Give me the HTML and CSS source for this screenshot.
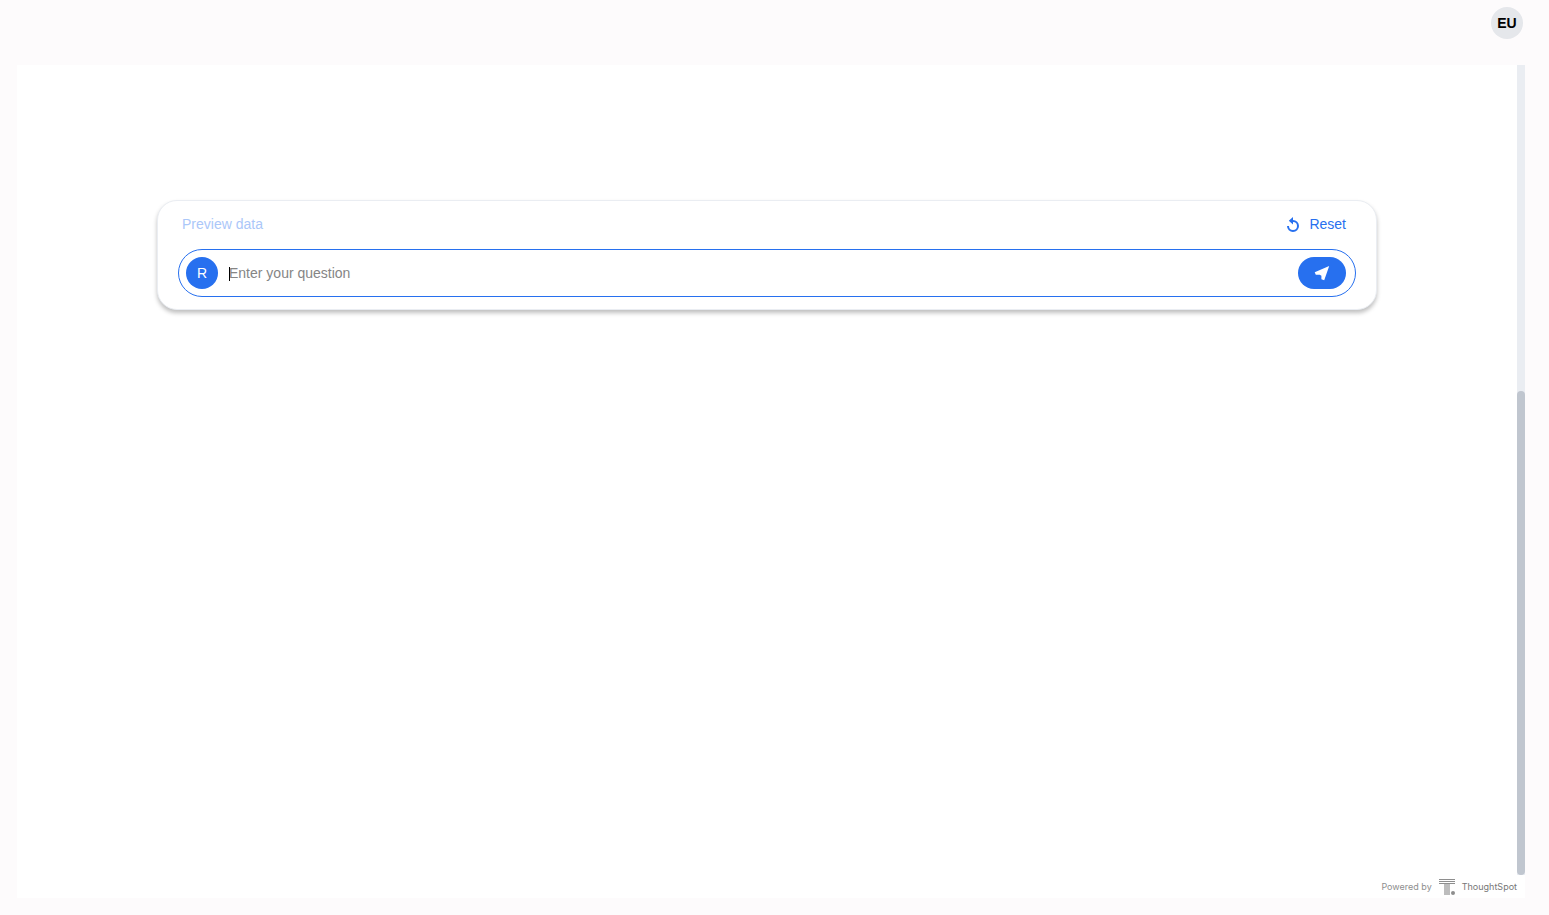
FILE: index.html
```html
<!DOCTYPE html>
<html lang="en">

<head>
    <meta charset="UTF-8">
    <meta name="viewport" content="width=device-width, initial-scale=1.0">
    <title>ThoughtSpot</title>
    <link rel="stylesheet" href="styles.css">
</head>

<body>
    <header class="topbar">
        <button class="user-button" type="button">EU</button>
    </header>

    <main class="panel">
        <div class="panel-body">
            <div class="conversation">
                <form class="prompt-card">
                    <div class="prompt-actions">
                        <button class="text-button" type="button" disabled>Preview data</button>
                        <button class="text-button" type="button">
                            <svg class="reset-icon" viewBox="0 0 16 16" aria-hidden="true">
                                <path d="M7.500 5h.5a5 5 0 1 1-5 5" fill="none" stroke="currentColor" stroke-width="2" />
                                <path d="M3.800 4.800L8 1v7.600z" fill="currentColor" />
                            </svg>
                            Reset
                        </button>
                    </div>
                    <div class="prompt-box">
                        <span class="source-badge">R</span>
                        <div class="prompt-field">
                            <input type="text" placeholder="Enter your question" aria-label="Enter your question">
                        </div>
                        <button class="send-button" type="submit" aria-label="Send">
                            <svg class="send-icon" viewBox="0 0 16 16" aria-hidden="true">
                                <path d="M15.200 1L10.200 15.300L7.400 14.200V10.800L5.700 9.700L1.800 9.700L.700 7.200z" fill="currentColor" />
                            </svg>
                        </button>
                    </div>
                </form>
            </div>
            <div class="scroll-track">
                <div class="scroll-thumb"></div>
            </div>
        </div>

        <footer class="powered-by">
            <span>Powered by</span>
            <svg class="brand-icon" viewBox="0 0 16 16" aria-hidden="true">
                <path d="M0 .5h16M0 2.500h16M0 4.500h16" stroke="#8e8e8e" stroke-width="1" />
                <path d="M5 5h6v11H5z" fill="#bdbdbd" />
                <circle cx="14" cy="14" r="2" fill="#8e8e8e" />
            </svg>
            <span class="brand-name">ThoughtSpot</span>
        </footer>
    </main>
</body>

</html>
```
FILE: styles.css
```css
* {
    box-sizing: border-box;
}

body {
    margin: 0;
    min-height: 100vh;
    display: flex;
    flex-direction: column;
    background-color: #fdfbfc;
    font-family: "Liberation Sans", Arial, sans-serif;
    font-size: 14px;
}

button {
    border: none;
    padding: 0;
    font: inherit;
    cursor: pointer;
}

.topbar {
    display: flex;
    justify-content: flex-end;
    padding: 7px 26px 26px;
}

.user-button {
    width: 32px;
    height: 32px;
    border-radius: 50%;
    background-color: #e5e7eb;
    color: #000;
    font-weight: bold;
}

.panel {
    flex: 1;
    display: flex;
    flex-direction: column;
    margin: 0 24px 17px 17px;
    background-color: #fff;
}

.panel-body {
    flex: 1;
    display: flex;
}

.conversation {
    flex: 1;
    padding: 135px 20px 0;
}

.prompt-card {
    max-width: 1220px;
    margin: 0 auto;
    padding: 12px 20px;
    border: 1px solid #eaedf2;
    border-radius: 20px;
    background-color: #fff;
    box-shadow: 0 3px 4px rgba(0, 0, 0, 0.25);
}

.prompt-actions {
    display: flex;
    justify-content: space-between;
    padding: 0 10px 0 4px;
    margin-bottom: 14px;
}

.text-button {
    display: flex;
    align-items: center;
    gap: 8px;
    background: none;
    color: #2770ef;
    line-height: 22px;
}

.text-button:disabled {
    color: #abc7f9;
    cursor: default;
}

.reset-icon {
    width: 16px;
    height: 16px;
}

.prompt-box {
    display: flex;
    align-items: center;
    height: 48px;
    padding: 0 9px 0 7px;
    border: 1px solid #2770ef;
    border-radius: 24px;
}

.source-badge {
    width: 32px;
    border-radius: 50%;
    background-color: #2770ef;
    color: #fff;
    line-height: 32px;
    text-align: center;
}

.prompt-field {
    position: relative;
    flex: 1;
    margin: 0 11px;
}

/* text cursor */
.prompt-field::before {
    content: '';
    position: absolute;
    top: 5px;
    left: 0;
    width: 1px;
    height: 14px;
    background-color: #000;
}

.prompt-field input {
    display: block;
    width: 100%;
    border: none;
    outline: none;
    padding: 0;
    background: none;
    font: inherit;
    line-height: 22px;
}

.prompt-field input::placeholder {
    color: #858585;
}

.send-button {
    display: flex;
    align-items: center;
    justify-content: center;
    width: 48px;
    height: 32px;
    border-radius: 16px;
    background-color: #2770ef;
    color: #fff;
}

.send-icon {
    width: 16px;
    height: 16px;
}

.scroll-track {
    display: flex;
    align-items: flex-end;
    width: 8px;
    background-color: #eaedf2;
}

.scroll-thumb {
    width: 100%;
    height: 59.8%;
    border-radius: 4px;
    background-color: #c0c6cf;
}

.powered-by {
    display: flex;
    align-items: center;
    justify-content: flex-end;
    gap: 7px;
    height: 23px;
    padding-right: 8px;
    color: #8e8e8e;
    font-family: Inter, sans-serif;
    font-size: 9px;
}

.brand-icon {
    width: 16px;
    height: 16px;
}

.brand-name {
    color: #777;
}
```
